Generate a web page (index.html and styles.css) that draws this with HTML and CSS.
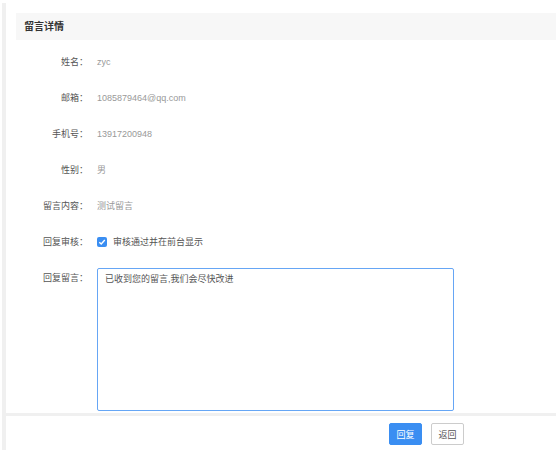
FILE: index.html
```html
<!DOCTYPE html>
<html lang="zh-CN">
<head>
<meta charset="utf-8">
<title>留言详情</title>
<link rel="stylesheet" href="styles.css">
</head>
<body>
<div class="page">
  <div class="panel">
    <div class="panel-head">留言详情</div>
    <div class="form">
      <div class="row"><span class="label">姓名：</span><span class="value">zyc</span></div>
      <div class="row"><span class="label">邮箱：</span><span class="value">1085879464@qq.com</span></div>
      <div class="row"><span class="label">手机号：</span><span class="value">13917200948</span></div>
      <div class="row"><span class="label">性别：</span><span class="value">男</span></div>
      <div class="row"><span class="label">留言内容：</span><span class="value">测试留言</span></div>
      <div class="row"><span class="label">回复审核：</span>
        <label class="check"><span class="box"><svg width="8" height="8" viewBox="0 0 8 8"><path d="M1.3 4.2 L3.2 6 L6.8 2" fill="none" stroke="#fff" stroke-width="1.4"/></svg></span><span class="check-text">审核通过并在前台显示</span></label>
      </div>
      <div class="row row-top"><span class="label label-pad">回复留言：</span>
        <textarea class="reply">已收到您的留言,我们会尽快改进</textarea>
      </div>
    </div>
  </div>
  <div class="footer">
    <button class="btn btn-primary">回复</button>
    <button class="btn btn-default">返回</button>
  </div>
</div>
</body>
</html>
```

FILE: styles.css
```css
html, body {
  margin: 0;
  padding: 0;
  background: #fff;
}
body {
  font-family: "Liberation Sans", "Noto Sans CJK SC", sans-serif;
  font-size: 9px;
  color: #555;
}
.page {
  margin: 3px 2px 0 2px;
  border-left: 4px solid #f0f0f0;
  height: 447px;
  display: flex;
  flex-direction: column;
}
.panel {
  padding: 10px 0 0 10px;
}
.panel-head {
  height: 27px;
  line-height: 27px;
  background: #f7f7f7;
  padding-left: 8px;
  font-size: 10px;
  font-weight: bold;
  color: #333;
}
.form {
  display: flex;
  flex-direction: column;
  gap: 24px;
  padding-top: 16px;
}
.row {
  display: grid;
  grid-template-columns: 72px 1fr;
  column-gap: 9px;
  align-items: center;
  line-height: 12px;
  height: 12px;
}
.row-top {
  align-items: start;
  height: auto;
  margin-top: -4px;
}
.label {
  text-align: right;
  color: #555;
}
.label-pad {
  padding-top: 4px;
}
.value {
  color: #999;
}
.check {
  display: flex;
  align-items: center;
  gap: 6px;
  color: #555;
}
.box {
  width: 10px;
  height: 10px;
  border-radius: 2px;
  background: #3a8ef2;
  display: flex;
  align-items: center;
  justify-content: center;
}
.box svg {
  display: block;
}
.reply {
  width: 357px;
  height: 143px;
  box-sizing: border-box;
  border: 1px solid #66a6f5;
  border-radius: 2px;
  padding: 4px 7px;
  font-family: "Liberation Sans", "Noto Sans CJK SC", sans-serif;
  font-size: 9px;
  line-height: 12px;
  color: #555;
  resize: none;
  outline: none;
  margin: 0;
}
.footer {
  margin-top: 2px;
  border-top: 3px solid #f0f0f0;
  padding: 7px 0 0 383px;
  display: flex;
  gap: 9px;
}
.btn {
  height: 22px;
  width: 33px;
  padding: 0;
  font-family: "Liberation Sans", "Noto Sans CJK SC", sans-serif;
  font-size: 9px;
  border-radius: 2px;
  box-sizing: border-box;
}
.btn-primary {
  background: #3a8ef2;
  border: 1px solid #3a8ef2;
  color: #fff;
}
.btn-default {
  background: #fff;
  border: 1px solid #ccc;
  color: #555;
}
```
